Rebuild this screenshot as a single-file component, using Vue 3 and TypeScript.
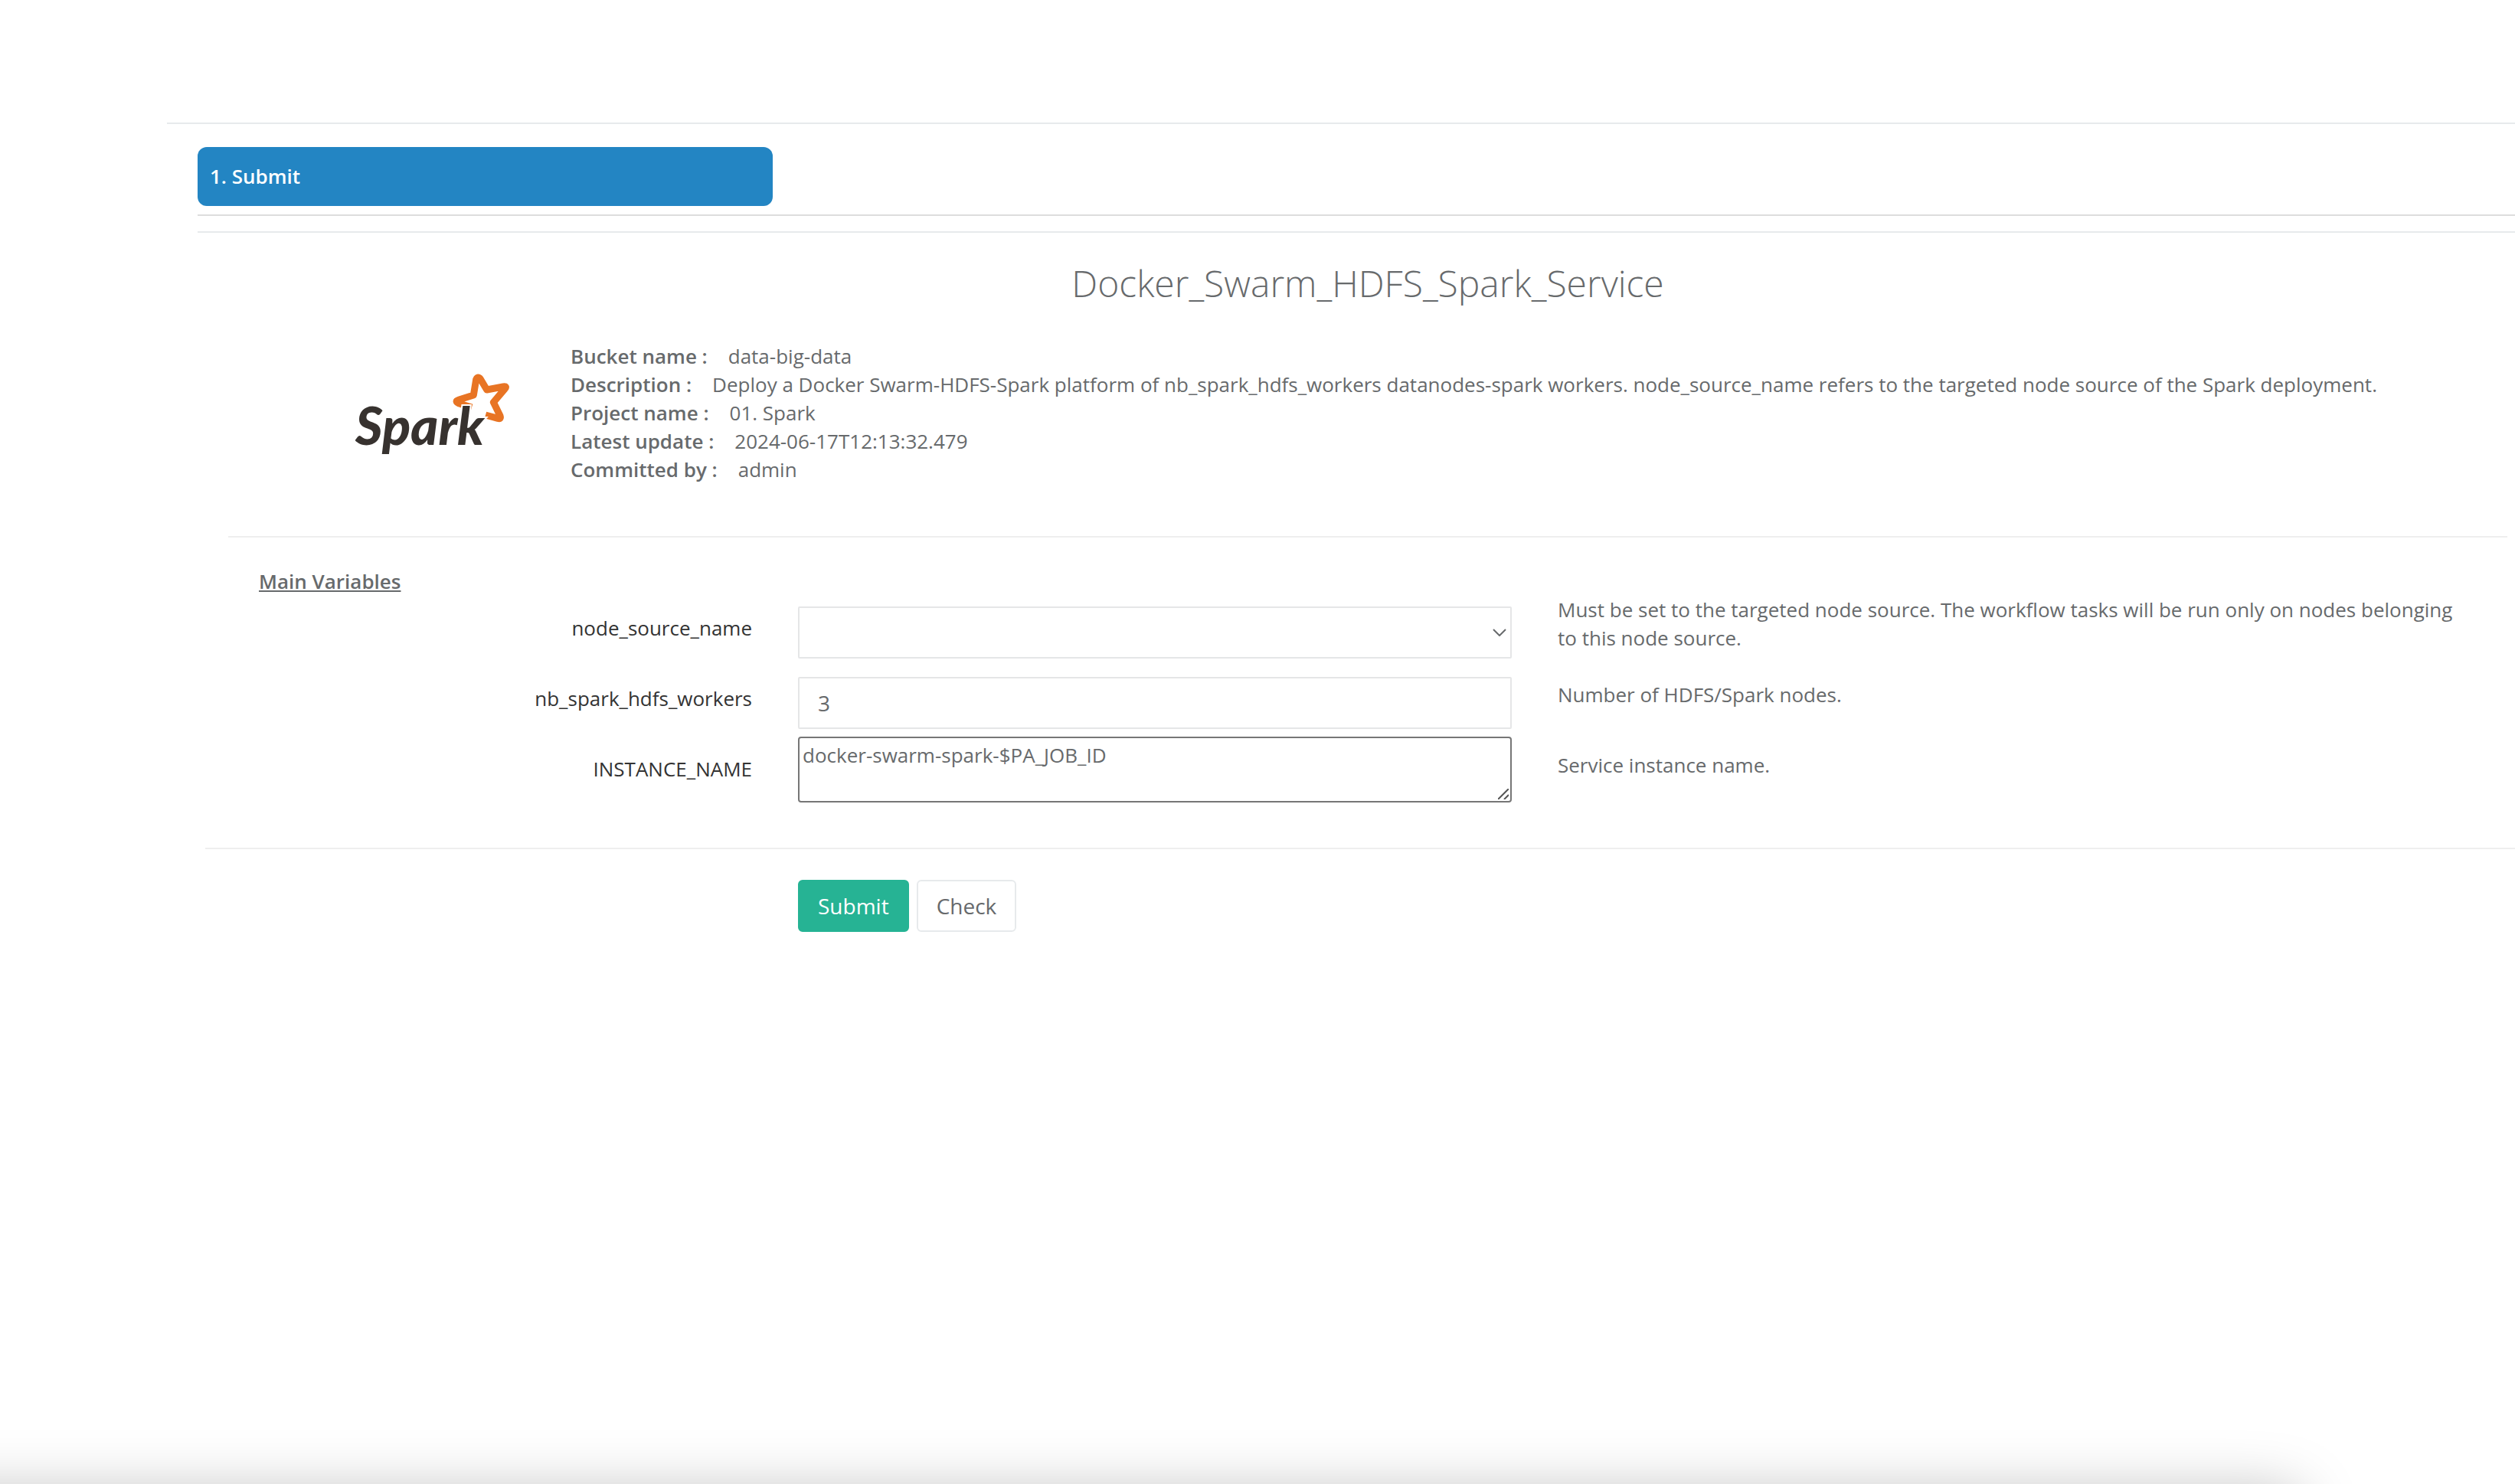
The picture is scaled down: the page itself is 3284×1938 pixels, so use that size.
<script setup lang="ts">
import { ref } from 'vue'

interface Detail {
  label: string
  value: string
}

const details: Detail[] = [
  { label: 'Bucket name :', value: 'data-big-data' },
  {
    label: 'Description :',
    value:
      'Deploy a Docker Swarm-HDFS-Spark platform of nb_spark_hdfs_workers datanodes-spark workers. node_source_name refers to the targeted node source of the Spark deployment.',
  },
  { label: 'Project name :', value: '01. Spark' },
  { label: 'Latest update :', value: '2024-06-17T12:13:32.479' },
  { label: 'Committed by :', value: 'admin' },
]

const nodeSource = ref('')
const workers = ref('3')
const instanceName = ref('docker-swarm-spark-$PA_JOB_ID')
</script>

<template>
  <div class="page">
    <main class="panel">
      <div class="content">
        <nav class="steps">
          <a class="step" href="#submit">1. Submit</a>
        </nav>

        <section class="workflow">
          <h1 class="title">Docker_Swarm_HDFS_Spark_Service</h1>

          <div class="summary">
            <svg class="logo" viewBox="0 0 780 420" role="img" aria-label="Spark">
              <path
                class="star"
                d="M528 186L479 171Q458 162 478 156L535 138L545 77Q552 62 562 75L587 117L651 105Q668 102 657 114L613 166L639 219Q644 233 630 229L582 216"
              />
              <text class="wordmark" x="72" y="333">Spark</text>
            </svg>
            <div class="details">
              <div v-for="d in details" :key="d.label">
                <b class="name">{{ d.label }}</b><span>{{ d.value }}</span>
              </div>
            </div>
          </div>

          <hr class="rule" />

          <form @submit.prevent>
            <h2 class="group">Main Variables</h2>

            <div class="row">
              <label class="label" for="node-source">node_source_name</label>
              <div class="field spaced">
                <select id="node-source" v-model="nodeSource" class="control">
                  <option value=""></option>
                </select>
                <svg class="chevron" viewBox="0 0 18 10" aria-hidden="true">
                  <path d="M1 1L9 9L17 1" />
                </svg>
              </div>
              <div class="help">
                Must be set to the targeted node source. The workflow tasks will be run only on nodes belonging to this
                node source.
              </div>
            </div>

            <div class="row">
              <label class="label" for="workers">nb_spark_hdfs_workers</label>
              <div class="field spaced">
                <input id="workers" v-model="workers" class="control" type="text" />
              </div>
              <div class="help">Number of HDFS/Spark nodes.</div>
            </div>

            <div class="row">
              <label class="label" for="instance">INSTANCE_NAME</label>
              <div class="field">
                <textarea id="instance" v-model="instanceName" class="area"></textarea>
                <svg class="grip" viewBox="0 0 14 14" aria-hidden="true">
                  <path d="M0 14L14 0M8 14L14 8" />
                </svg>
              </div>
              <div class="help">Service instance name.</div>
            </div>

            <hr class="rule wide" />

            <div class="row">
              <div class="actions">
                <button class="btn primary" type="submit">Submit</button>
                <button class="btn" type="button">Check</button>
              </div>
            </div>
          </form>
        </section>
      </div>
    </main>
    <div class="shade" aria-hidden="true"></div>
  </div>
</template>

<style>
body {
  margin: 0;
  background: #fff;
}
</style>

<style scoped>
.page {
  min-height: 100vh;
  box-sizing: border-box;
  padding: 160px 0 0 218px;
  overflow: hidden;
  color: #676a6c;
  font-family: 'Open Sans', sans-serif;
  font-size: 26px;
  line-height: 37px;
}

.page * {
  box-sizing: border-box;
}

/* The panel runs past the right side of the window. */
.panel {
  margin-right: -70px;
  padding: 30px 40px;
  border-top: 2px solid #e7eaec;
}

.steps {
  padding-bottom: 11px;
  border-bottom: 2px solid #ddd;
}

.step {
  display: block;
  width: calc(25% - 13px);
  padding: 20px 16px;
  border-radius: 12px;
  background: #2385c3;
  color: #fff;
  font-weight: 600;
  text-decoration: none;
}

.workflow {
  margin-top: 20px;
  padding: 39px 40px 0;
  border-top: 2px solid #e7eaec;
}

.title {
  margin: 0 0 51px;
  font-size: 48px;
  font-weight: 300;
  line-height: 53px;
  text-align: center;
}

.summary {
  display: flex;
  align-items: center;
  gap: 45px;
  height: 185px;
  padding-left: 142px;
}

.logo {
  flex: none;
  width: 260px;
  height: 140px;
}

.star {
  fill: none;
  stroke: #e87424;
  stroke-width: 27;
  stroke-linejoin: round;
}

.wordmark {
  fill: #37322f;
  stroke: #fff;
  stroke-width: 12px;
  paint-order: stroke;
  font-family: Lato, sans-serif;
  font-size: 206px;
  font-style: italic;
  font-weight: 900;
}

.name {
  margin-right: 27px;
  font-weight: 600;
}

.rule {
  height: 2px;
  margin: 68px 0 39px;
  border: 0;
  background: #eee;
}

.rule.wide {
  margin: 53px -40px 40px -30px;
}

.group {
  margin: 0 40px;
  font-size: 26px;
  font-weight: 600;
  line-height: 37px;
  text-decoration: underline;
}

.row {
  display: grid;
  grid-template-columns: 3fr 4fr 5fr;
  align-items: start;
  min-height: 92px;
  margin: 0 30px 0 -30px;
}

.label {
  padding: 24px 30px 0;
  color: #333;
  text-align: right;
}

.field {
  position: relative;
  display: flex;
  margin: 0 30px;
}

.spaced {
  margin-top: 14px;
}

.control {
  width: 100%;
  height: 68px;
  padding: 0 24px;
  border: 2px solid #e5e6e7;
  border-radius: 2px;
  background: #fff;
  color: inherit;
  font: inherit;
  font-size: 28px;
  appearance: none;
}

.chevron {
  position: absolute;
  top: 29px;
  right: 7px;
  width: 18px;
  height: 10px;
  fill: none;
  stroke: #676a6c;
  stroke-width: 2;
}

.area {
  display: block;
  width: 100%;
  height: 86px;
  padding: 4px;
  border: 2px solid #767676;
  border-radius: 4px;
  background: #fff;
  color: inherit;
  font: inherit;
  resize: none;
}

.grip {
  position: absolute;
  right: 4px;
  bottom: 4px;
  width: 14px;
  height: 14px;
  fill: none;
  stroke: #555;
  stroke-width: 2;
}

.help {
  display: flex;
  align-items: center;
  min-height: 74px;
  padding: 0 30px;
}

.actions {
  grid-column: 2;
  display: flex;
  gap: 10px;
  padding: 0 30px;
}

.btn {
  height: 68px;
  padding: 0 24px;
  border: 2px solid #e7eaec;
  border-radius: 6px;
  background: #fff;
  color: inherit;
  font: inherit;
  font-size: 28px;
}

.primary {
  border-color: #26b394;
  background: #26b394;
  color: #fff;
}

/* Soft shadow rising over the lower edge of the window. */
.shade {
  position: fixed;
  top: calc(100vh + 9px);
  right: 280px;
  left: -200px;
  height: 400px;
  border-radius: 20px;
  box-shadow: 0 0 76px rgba(0, 0, 0, 0.25);
  pointer-events: none;
}
</style>
